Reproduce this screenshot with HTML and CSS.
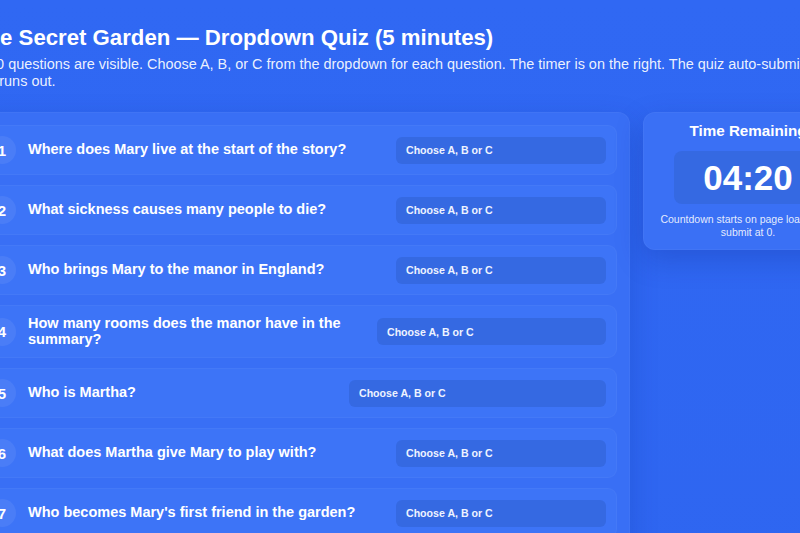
FILE: index.html
```html
<!DOCTYPE html>
<html lang="en">
<head>
<meta charset="utf-8">
<title>The Secret Garden — Dropdown Quiz</title>
<link rel="stylesheet" href="styles.css">
</head>
<body>
<div class="page">
  <header class="intro">
    <h1 class="title">The Secret Garden — Dropdown Quiz (5 minutes)</h1>
    <p class="lead">All 10 questions are visible. Choose A, B, or C from the dropdown for each question. The timer is on the right. The quiz auto-submits when time runs out.</p>
  </header>

  <div class="layout">
    <form class="quiz">
      <div class="q">
        <span class="num">1</span>
        <label class="q-text" for="q1">Where does Mary live at the start of the story?</label>
        <select class="pick" id="q1">
          <option>Choose A, B or C</option>
          <option>A) India</option>
          <option>B) London</option>
          <option>C) Yorkshire</option>
        </select>
      </div>
      <div class="q">
        <span class="num">2</span>
        <label class="q-text" for="q2">What sickness causes many people to die?</label>
        <select class="pick" id="q2">
          <option>Choose A, B or C</option>
          <option>A) Cholera</option>
          <option>B) Measles</option>
          <option>C) Influenza</option>
        </select>
      </div>
      <div class="q">
        <span class="num">3</span>
        <label class="q-text" for="q3">Who brings Mary to the manor in England?</label>
        <select class="pick" id="q3">
          <option>Choose A, B or C</option>
          <option>A) Mrs. Medlock</option>
          <option>B) Dickon</option>
          <option>C) Ben Weatherstaff</option>
        </select>
      </div>
      <div class="q">
        <span class="num">4</span>
        <label class="q-text" for="q4">How many rooms does the manor have in the summary?</label>
        <select class="pick pick-md" id="q4">
          <option>Choose A, B or C</option>
          <option>A) About a hundred rooms</option>
          <option>B) Ten rooms</option>
          <option>C) Thirty rooms</option>
        </select>
      </div>
      <div class="q">
        <span class="num">5</span>
        <label class="q-text" for="q5">Who is Martha?</label>
        <select class="pick pick-lg" id="q5">
          <option>Choose A, B or C</option>
          <option>A) A cheerful housemaid at the manor</option>
          <option>B) Mary's aunt</option>
          <option>C) The gardener's daughter</option>
        </select>
      </div>
      <div class="q">
        <span class="num">6</span>
        <label class="q-text" for="q6">What does Martha give Mary to play with?</label>
        <select class="pick" id="q6">
          <option>Choose A, B or C</option>
          <option>A) A skipping rope</option>
          <option>B) A doll</option>
          <option>C) A ball</option>
        </select>
      </div>
      <div class="q">
        <span class="num">7</span>
        <label class="q-text" for="q7">Who becomes Mary's first friend in the garden?</label>
        <select class="pick" id="q7">
          <option>Choose A, B or C</option>
          <option>A) A robin</option>
          <option>B) A cat</option>
          <option>C) A pony</option>
        </select>
      </div>
      <div class="q">
        <span class="num">8</span>
        <label class="q-text" for="q8">What does Mary find buried in the soil?</label>
        <select class="pick" id="q8">
          <option>Choose A, B or C</option>
          <option>A) An old key</option>
          <option>B) A coin</option>
          <option>C) A letter</option>
        </select>
      </div>
      <div class="q">
        <span class="num">9</span>
        <label class="q-text" for="q9">Who is Colin?</label>
        <select class="pick" id="q9">
          <option>Choose A, B or C</option>
          <option>A) Mary's cousin</option>
          <option>B) Martha's brother</option>
          <option>C) The gardener</option>
        </select>
      </div>
      <div class="q">
        <span class="num">10</span>
        <label class="q-text" for="q10">How does the garden change Colin?</label>
        <select class="pick" id="q10">
          <option>Choose A, B or C</option>
          <option>A) He grows strong and walks</option>
          <option>B) He leaves the manor</option>
          <option>C) He becomes ill</option>
        </select>
      </div>
    </form>

    <aside class="timer">
      <h2 class="timer-title">Time Remaining</h2>
      <div class="clock">04:20</div>
      <p class="timer-note">Countdown starts on page load; auto-submit at 0.</p>
    </aside>
  </div>
</div>
</body>
</html>
```

FILE: styles.css
```css
html, body {
  margin: 0;
  overflow: hidden;
}

body {
  font-family: "Liberation Sans", Arial, sans-serif;
  color: #ffffff;
  background: linear-gradient(180deg, #3068f3 0%, #2e65f0 100%);
  min-height: 100vh;
}

.page {
  width: 889px;
  margin-left: -36px;
  padding-top: 25px;
  box-sizing: border-box;
}

/* heading block */
.intro {
  padding-left: 4px;
}

.title {
  margin: 0 0 0 5px;
  font-size: 22.2px;
  font-weight: 700;
  line-height: 1.15;
}

.lead {
  margin: 5px -12px 0 0;
  font-size: 14.45px;
  line-height: 1.2;
  color: rgba(255, 255, 255, 0.92);
}

/* two columns: questions + timer */
.layout {
  display: flex;
  align-items: flex-start;
  gap: 13px;
  margin-top: 22px;
}

.quiz {
  width: 666px;
  flex: none;
  box-sizing: border-box;
  margin: 0;
  padding: 12px;
  display: flex;
  flex-direction: column;
  gap: 10px;
  background: #396ff5;
  border: 1px solid rgba(255, 255, 255, 0.04);
  border-radius: 12px;
  box-shadow: 0 10px 28px rgba(10, 40, 140, 0.22);
}

.q {
  display: flex;
  align-items: center;
  gap: 12px;
  padding: 10px;
  background: #3d74f7;
  border: 1px solid rgba(255, 255, 255, 0.04);
  border-radius: 9px;
}

.num {
  flex: none;
  width: 28px;
  height: 28px;
  border-radius: 50%;
  display: grid;
  place-items: center;
  background: rgba(255, 255, 255, 0.07);
  font-size: 15px;
  font-weight: 700;
}

.q-text {
  flex: 1;
  font-size: 14.5px;
  font-weight: 700;
  line-height: 15.5px;
}

.pick {
  flex: none;
  width: 210px;
  height: 27px;
  box-sizing: border-box;
  padding: 0 10px;
  border: none;
  border-radius: 6px;
  background: #3569e2;
  color: #eef3ff;
  font-family: "Liberation Sans", Arial, sans-serif;
  font-size: 10.6px;
  font-weight: 700;
  appearance: none;
  -webkit-appearance: none;
}

.pick-md {
  width: 229px;
}

.pick-lg {
  width: 257px;
}

/* countdown card */
.timer {
  width: 210px;
  flex: none;
  box-sizing: border-box;
  padding: 9px 14px 10px;
  text-align: center;
  background: #3a70f5;
  border: 1px solid rgba(255, 255, 255, 0.04);
  border-radius: 12px;
  box-shadow: 0 10px 28px rgba(10, 40, 140, 0.25);
}

.timer-title {
  margin: 0 0 11px;
  font-size: 15.2px;
  font-weight: 700;
  line-height: 1.15;
}

.clock {
  width: fit-content;
  margin: 0 auto;
  padding: 5px 29px;
  border-radius: 8px;
  background: #3569e2;
  font-size: 35px;
  font-weight: 700;
  line-height: 43px;
}

.timer-note {
  margin: 9px 0 0;
  font-size: 10.5px;
  line-height: 13px;
  color: rgba(255, 255, 255, 0.88);
}
```
